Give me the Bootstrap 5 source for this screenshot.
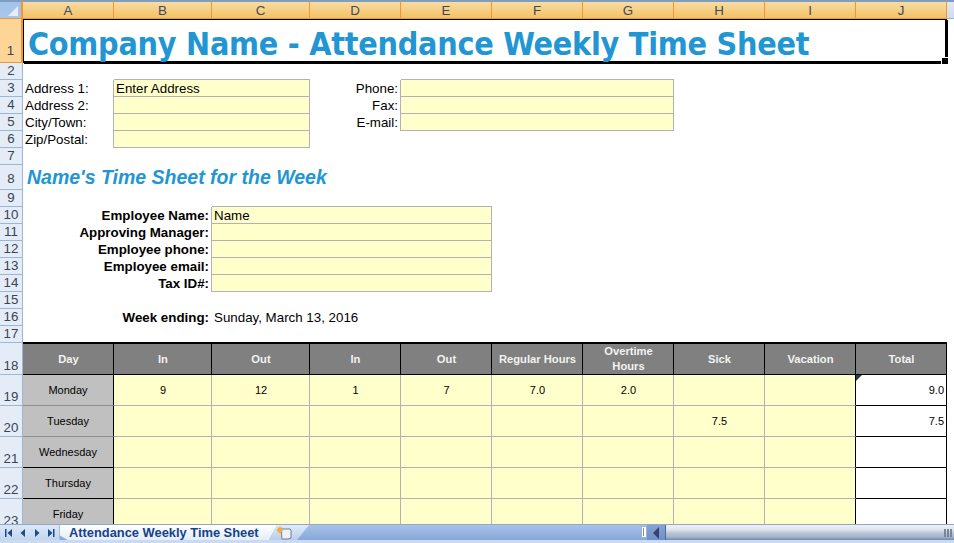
<!DOCTYPE html>
<html lang="en">
<head>
<meta charset="utf-8">
<title>Attendance Weekly Time Sheet</title>
<link href="https://cdn.jsdelivr.net/npm/bootstrap@5.3.0/dist/css/bootstrap.min.css" rel="stylesheet">
<style>
html,body{height:543px;overflow:hidden;background:#fff}
body{font-family:"Liberation Sans",Arial,sans-serif;font-size:13.33px;color:#000;width:954px}
.sheet-wrap{height:524px;overflow:hidden;flex:none}
.xl{border-collapse:separate;border-spacing:0;table-layout:fixed;width:954px}
.xl td,.xl th{padding:0 2px;line-height:15px;white-space:nowrap;overflow:hidden;font-weight:400}
.r19{height:19px}.r44{height:44px}.r17{height:17px}.r25{height:25px}.r32{height:32px}.r31{height:31px}
.xl .colh{background:linear-gradient(#f9dca2,#f2c266);border-right:1px solid #f29536;border-bottom:1px solid #f29536;border-top:2px solid #7f9dbf;text-align:center;color:#3f4a5c;padding:0;vertical-align:middle}
.xl .corner{background:linear-gradient(#a4c2ec,#a9c5ea);border-right:2px solid #f29536;border-bottom:1px solid #f29536;border-top:2px solid #7f9dbf;padding:0;position:relative}
.corner-tri{position:absolute;right:3px;bottom:2px;width:10px;height:10px;background:#e8eef6;clip-path:polygon(100% 0,100% 100%,0 100%)}
.xl .fillh{background:linear-gradient(#dfe8f5,#cfdcef);border-top:2px solid #7f9dbf;border-bottom:1px solid #9eb6ce;padding:0}
.xl .rh{background:#e4ecf7;border-right:1px solid #9eb6ce;border-bottom:1px solid #9eb6ce;text-align:center;color:#3a4453;padding:0;vertical-align:bottom;line-height:16px}
.xl .rh-on{background:#fdd596;border-right:2px solid #f29536;border-bottom:1px solid #f29536;padding-bottom:3px}
.xl .rh-mid{padding-bottom:2px}
.xl .titlecell{border:1px solid #000;border-right-width:2px;border-bottom-width:2px;box-shadow:1px 1px 0 #000;position:relative;overflow:visible;padding:7px 0 0 4px;vertical-align:top;font-family:"DejaVu Sans Condensed","DejaVu Sans",Tahoma,sans-serif;font-stretch:condensed;font-weight:700;font-size:32px;line-height:34px;color:#2196d3;letter-spacing:-.27px}
.sel-handle{position:absolute;right:-3px;bottom:-3px;width:6px;height:6px;background:#000;outline:1px solid #fff}
.xl td.subcell{padding:0 0 0 4px;vertical-align:top;font-weight:700;font-style:italic;font-size:19.5px;line-height:24px;color:#2196d3}
.xl td.ll{padding-left:2px}
.gr{border-right:1px solid #b2b2b2}
.gb{border-bottom:1px solid #b2b2b2}
.yl{background:#ffffcc}
.xl td.rt{text-align:right;padding-right:2px}
.xl td.bold{font-weight:700}
.xl td.wk{padding-right:3px}
.xl .hd{background:#808080;color:#f2f2f2;font-weight:700;font-size:11.2px;text-align:center;border-top:1px solid #000;border-bottom:1px solid #000;border-right:1px solid #000;padding:0 0 0 1px;line-height:15px;white-space:normal}
.xl .dayc{background:#c0c0c0;font-size:11px;text-align:center;border-right:1px solid #000;border-bottom:1px solid #8f8f8f}
.xl .dayc.bk{border-bottom-color:#000}
.xl .dt{font-size:11px;text-align:center;background:#ffffcc;border-right:1px solid #b2b2b2;border-bottom:1px solid #b2b2b2;vertical-align:middle;padding:0 0 0 1px}
.xl .dt.last{border-right-color:#000}
.xl .tot{font-size:11px;text-align:right;background:#fff;border-right:1px solid #000;border-bottom:1px solid #000;padding-right:2px;position:relative;vertical-align:middle}
.note-tri{position:absolute;left:0;top:0;width:6px;height:6px;background:#2b3a4a;clip-path:polygon(0 0,100% 0,0 100%)}
.blackb{border-bottom:1px solid #000}
.statusbar{height:19px;flex:none;background:#c9daf1}
.tabrow{height:16px;border-top:1px solid #8fa9cc}
.tabnav{width:60px;flex:none;background:linear-gradient(#dbe7f7,#c3d6ef);border-right:1px solid #a9c0de}
.sheettab{width:217px;background:linear-gradient(#fff,#e3edf9);clip-path:polygon(0 0,100% 0,96.3% 100%,3.5% 100%,0 70%);color:#15428b;font-weight:700;font-size:12.87px;line-height:15px;padding-left:9px;flex:none}
.tabrow-bg{background:linear-gradient(#a8c3e9,#86a7d8)}
.newtab{width:40px;margin-left:-8px;padding-right:9px;background:linear-gradient(#e2ecf9,#b9cde9);clip-path:polygon(20% 0,100% 0,70% 100%,0 100%);flex:none}
.split{width:6px;background:#fff;border:1px solid #9db6d8;margin-top:1px;height:12px;flex:none}
.split-mark{width:1px;height:8px;background:#7a8fb0;margin:1px 0 0 1px}
.scrbtn{width:19px;background:linear-gradient(#86a3d3,#6f90c8);border-right:1px solid #446a9e;flex:none}
.thumb{width:288px;flex:none;background:linear-gradient(#eef1f6 0,#dfe4ec 30%,#b8c4d6 55%,#a3b3cb 80%,#6f86ad 100%);padding-right:1px}
.grip{width:2px;height:8px;background:#76869e;margin-right:1px}
</style>
</head>
<body class="d-flex flex-column">
<div class="sheet-wrap">
<table class="xl">
<colgroup><col style="width:23px"><col style="width:91px"><col style="width:98px"><col style="width:98px"><col style="width:91px"><col style="width:91px"><col style="width:91px"><col style="width:91px"><col style="width:91px"><col style="width:91px"><col style="width:91px"><col style="width:8px"></colgroup>
<tbody>
<tr class="r19"><th class="corner"><div class="corner-tri"></div></th><th class="colh">A</th><th class="colh">B</th><th class="colh">C</th><th class="colh">D</th><th class="colh">E</th><th class="colh">F</th><th class="colh">G</th><th class="colh">H</th><th class="colh">I</th><th class="colh">J</th><th class="fillh"></th></tr>
<tr class="r44"><th class="rh rh-on">1</th><td colspan="10" class="titlecell">Company Name - Attendance Weekly Time Sheet<div class="sel-handle"></div></td><td></td></tr>
<tr class="r17"><th class="rh">2</th><td></td><td colspan="2" class="gb"></td><td></td><td colspan="3" class="gb"></td><td colspan="4"></td></tr>
<tr class="r17"><th class="rh">3</th><td class="gr ll">Address 1:</td><td colspan="2" class="yl gr gb">Enter Address</td><td class="gr rt">Phone:</td><td colspan="3" class="yl gr gb"></td><td colspan="4"></td></tr>
<tr class="r17"><th class="rh">4</th><td class="gr ll">Address 2:</td><td colspan="2" class="yl gr gb"></td><td class="gr rt">Fax:</td><td colspan="3" class="yl gr gb"></td><td colspan="4"></td></tr>
<tr class="r17"><th class="rh">5</th><td class="gr ll">City/Town:</td><td colspan="2" class="yl gr gb"></td><td class="gr rt">E-mail:</td><td colspan="3" class="yl gr gb"></td><td colspan="4"></td></tr>
<tr class="r17"><th class="rh">6</th><td class="gr ll">Zip/Postal:</td><td colspan="2" class="yl gr gb"></td><td colspan="8"></td></tr>
<tr class="r17"><th class="rh">7</th><td colspan="11"></td></tr>
<tr class="r25"><th class="rh rh-mid">8</th><td colspan="10" class="subcell">Name's Time Sheet for the Week</td><td></td></tr>
<tr class="r17"><th class="rh">9</th><td colspan="2"></td><td colspan="3" class="gb"></td><td colspan="6"></td></tr>
<tr class="r17"><th class="rh">10</th><td colspan="2" class="gr rt bold">Employee Name:</td><td colspan="3" class="yl gr gb">Name</td><td colspan="6"></td></tr>
<tr class="r17"><th class="rh">11</th><td colspan="2" class="gr rt bold">Approving Manager:</td><td colspan="3" class="yl gr gb"></td><td colspan="6"></td></tr>
<tr class="r17"><th class="rh">12</th><td colspan="2" class="gr rt bold">Employee phone:</td><td colspan="3" class="yl gr gb"></td><td colspan="6"></td></tr>
<tr class="r17"><th class="rh">13</th><td colspan="2" class="gr rt bold">Employee email:</td><td colspan="3" class="yl gr gb"></td><td colspan="6"></td></tr>
<tr class="r17"><th class="rh">14</th><td colspan="2" class="gr rt bold">Tax ID#:</td><td colspan="3" class="yl gr gb"></td><td colspan="6"></td></tr>
<tr class="r17"><th class="rh">15</th><td colspan="11"></td></tr>
<tr class="r17"><th class="rh">16</th><td colspan="2" class="rt bold wk">Week ending:</td><td colspan="9">Sunday, March 13, 2016</td></tr>
<tr class="r17"><th class="rh">17</th><td colspan="10" class="blackb"></td><td></td></tr>
<tr class="r32"><th class="rh">18</th><th class="hd">Day</th><th class="hd">In</th><th class="hd">Out</th><th class="hd">In</th><th class="hd">Out</th><th class="hd">Regular Hours</th><th class="hd">Overtime<br>Hours</th><th class="hd">Sick</th><th class="hd">Vacation</th><th class="hd">Total</th><td></td></tr>
<tr class="r31"><th class="rh">19</th><td class="dayc">Monday</td><td class="dt">9</td><td class="dt">12</td><td class="dt">1</td><td class="dt">7</td><td class="dt">7.0</td><td class="dt">2.0</td><td class="dt"></td><td class="dt last"></td><td class="tot"><div class="note-tri"></div>9.0</td><td></td></tr>
<tr class="r31"><th class="rh">20</th><td class="dayc">Tuesday</td><td class="dt"></td><td class="dt"></td><td class="dt"></td><td class="dt"></td><td class="dt"></td><td class="dt"></td><td class="dt">7.5</td><td class="dt last"></td><td class="tot">7.5</td><td></td></tr>
<tr class="r31"><th class="rh">21</th><td class="dayc bk">Wednesday</td><td class="dt"></td><td class="dt"></td><td class="dt"></td><td class="dt"></td><td class="dt"></td><td class="dt"></td><td class="dt"></td><td class="dt last"></td><td class="tot"></td><td></td></tr>
<tr class="r31"><th class="rh">22</th><td class="dayc bk">Thursday</td><td class="dt"></td><td class="dt"></td><td class="dt"></td><td class="dt"></td><td class="dt"></td><td class="dt"></td><td class="dt"></td><td class="dt last"></td><td class="tot"></td><td></td></tr>
<tr class="r31"><th class="rh">23</th><td class="dayc bk">Friday</td><td class="dt"></td><td class="dt"></td><td class="dt"></td><td class="dt"></td><td class="dt"></td><td class="dt"></td><td class="dt"></td><td class="dt last"></td><td class="tot"></td><td></td></tr>
</tbody>
</table>
</div>
<div class="statusbar">
<div class="tabrow tabrow-bg d-flex align-items-stretch">
  <div class="tabnav d-flex align-items-center justify-content-center">
    <svg width="56" height="12" viewBox="0 0 56 12"><g fill="#1c4c88"><rect x="3" y="2" width="1.5" height="8"/><path d="M10 2v8L5.5 6z"/><path d="M23 2v8l-4.500-4z"/><path d="M33 2v8l4.500-4z"/><path d="M46 2v8l4.500-4z"/><rect x="51" y="2" width="1.500" height="8"/></g></svg>
  </div>
  <div class="sheettab">Attendance Weekly Time Sheet</div>
  <div class="newtab d-flex align-items-center justify-content-center">
    <svg width="17" height="14" viewBox="0 0 17 14"><path d="M5 3h9l1 1v8l-3 1H6z" fill="#eef2f8" stroke="#6f7f95" stroke-width="1"/><path d="M4 0l1 2 2-1-1 2 2 1-2 1 1 2-2-1-1 2-1-2-2 1 1-2-2-1 2-1-1-2 2 1z" fill="#f2a83b"/></svg>
  </div>
  <div class="flex-grow-1"></div>
  <div class="split"><div class="split-mark"></div></div>
  <div class="scrbtn d-flex align-items-center justify-content-center">
    <svg width="9" height="12" viewBox="0 0 9 12"><path d="M7 0v12L1 6z" fill="#38406e"/></svg>
  </div>
  <div class="thumb d-flex align-items-center justify-content-end"><span class="grip"></span><span class="grip"></span><span class="grip"></span></div>
</div>
</div>
</body>
</html>
